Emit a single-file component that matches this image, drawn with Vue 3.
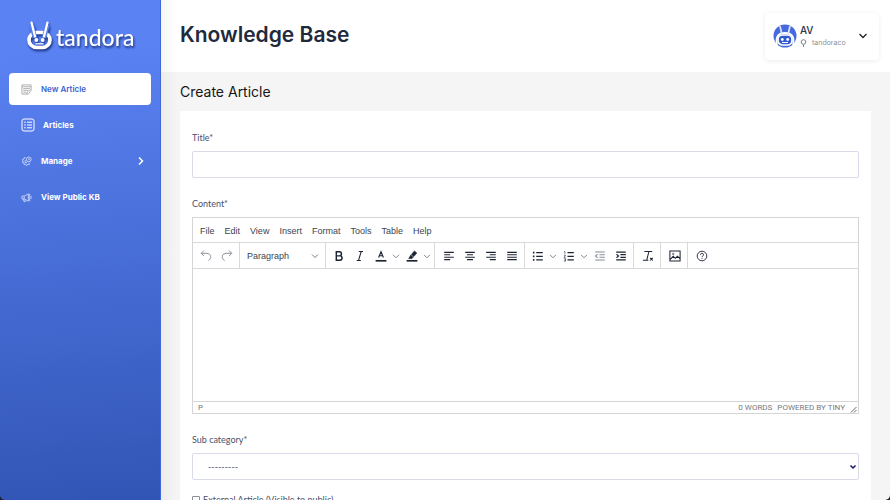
<script setup>
import { ref } from 'vue'

const title = ref('')
const category = ref('')
const external = ref(false)
const menus = ['File', 'Edit', 'View', 'Insert', 'Format', 'Tools', 'Table', 'Help']

const chevron = '<path d="M5 8 10 13l5-5"/>'
const groups = [
  [
    { label: 'Bold', body: '<path stroke-width="2.4" d="M5.500 3h5.200a3.300 3.300 0 0 1 0 6.800H5.500zM5.500 9.800h6a3.600 3.600 0 0 1 0 7.200h-6z"/>' },
    { label: 'Italic', body: '<path d="M8 2.500h7M4.500 17.500h7M12 2.500l-4.500 15" stroke-width="1.700"/>' },
    { label: 'Text color', body: '<path d="M6 12.500 10 3l4 9.500M7.300 9.500h5.400" stroke-width="1.900"/><path d="M1 18h18" stroke-width="2.800"/>' },
    { label: 'Text color options', arrow: true, body: chevron },
    { label: 'Highlight', body: '<path d="M9 7.500l5-6 4 3.500-5 6zM8 8.500l4 3.500-2 2.200H4.500z" fill="currentColor" stroke-width="1"/><path d="M1 18h18" stroke-width="2.800"/>' },
    { label: 'Highlight options', arrow: true, body: chevron },
  ],
  [
    { label: 'Align left', body: '<path d="M2 4h16M2 8h10M2 12h16M2 16h10" stroke-width="1.900"/>' },
    { label: 'Align center', body: '<path d="M2 4h16M5 8h10M2 12h16M5 16h10" stroke-width="1.900"/>' },
    { label: 'Align right', body: '<path d="M2 4h16M8 8h10M2 12h16M8 16h10" stroke-width="1.900"/>' },
    { label: 'Justify', body: '<path d="M2 4h16M2 8h16M2 12h16M2 16h16" stroke-width="1.900"/>' },
  ],
  [
    { label: 'Bullet list', body: '<path d="M7 4.500h11M7 10.500h11M7 16.500h11" stroke-width="2"/><path d="M1.500 4.500h2.600M1.500 10.500h2.600M1.500 16.500h2.600" stroke-width="2.800"/>' },
    { label: 'Bullet list options', arrow: true, body: chevron },
    { label: 'Numbered list', body: '<path d="M7.500 4.500H18M7.500 10.500H18M7.500 16.500H18" stroke-width="2"/><path d="M2 2.500h1.200v4M1.500 8.800h2.700L1.800 12.300h2.700M1.500 14.600h2.800v4H1.500M2.200 16.600h2" stroke-width="1"/>' },
    { label: 'Numbered list options', arrow: true, body: chevron },
    { label: 'Outdent', dim: true, body: '<path d="M2 3.500h16M9 7.800h9M9 12.200h9M2 16.500h16M6 7l-3.500 3L6 13" stroke-width="1.700"/>' },
    { label: 'Indent', body: '<path d="M2 3.500h16M9 7.800h9M9 12.200h9M2 16.500h16M2.500 7 6 10l-3.500 3" stroke-width="1.900"/>' },
  ],
  [
    { label: 'Clear formatting', body: '<path d="M4 2.500h13M11.500 2.500 8 16.500M1.500 17h9M13.500 13l4.500 4.500M18 13l-4.500 4.500" stroke-width="1.700"/>' },
  ],
  [
    { label: 'Insert image', body: '<path d="M1.500 1.500h17v17h-17zM2 15.500l5-5 3.500 3.500L14 10.500l4.500 4" stroke-width="1.700"/><circle cx="7" cy="6.500" r="1.300"/>' },
  ],
  [
    { label: 'Help', body: '<circle cx="10" cy="10" r="8" stroke-width="1.500"/><path d="M7.500 8a2.500 2.500 0 1 1 3.600 2.200c-.8.400-1.100.800-1.100 1.700M10 13.700v1.500" stroke-width="1.600"/>' },
  ],
]
const isLoose = (group) => !group.some((tool) => tool.arrow)
</script>

<template>
  <div class="app">
    <aside class="sidebar">
      <a class="logo" href="#" aria-label="tandora">
        <svg width="28" height="32" viewBox="0 0 28 32" fill="none" aria-hidden="true">
          <rect x="3" y="12.500" width="21" height="15" rx="7.500" stroke="#fff" stroke-width="3.600" />
          <path d="M5.500 5 9 18M21.500 5 18 18" stroke="#5a80f0" stroke-width="4.600" />
          <path d="M5.500 2.500 9 16.500M21.500 2.500 18 16.500" stroke="#fff" stroke-width="2.200" stroke-linecap="round" />
          <circle cx="10.300" cy="20" r="1.900" fill="#fff" />
          <circle cx="16.700" cy="20" r="1.900" fill="#fff" />
          <path d="M9.500 23.800h8" stroke="#fff" stroke-width="1.200" />
        </svg>
        <span>tandora</span>
      </a>
      <nav class="nav">
        <a class="item active" href="#">
          <svg class="icon" viewBox="0 0 12 12" aria-hidden="true">
            <path d="M1 1h10v6L8 11H1zM1 3h10M2.500 5h7M2.500 7h5M2.500 9h3M6 11l1-2.500L10.500 6" />
          </svg>
          <span>New Article</span>
        </a>
        <a class="item" href="#">
          <svg class="icon big" viewBox="0 0 14 14" aria-hidden="true">
            <rect x="1" y="1" width="12" height="12" rx="2" />
            <path d="M3.200 4.200h1.600M3.200 7h1.600M3.200 9.800h1.600M6 4.200h5M6 7h5M6 9.800h5" />
          </svg>
          <span>Articles</span>
        </a>
        <a class="item" href="#">
          <svg class="icon soft" viewBox="0 0 12 12" aria-hidden="true">
            <path d="M5 2 3.500 1.800 3.300 3.300 1.500 4l.7 1.500L1.500 7l1.800.7v1.500L5 9l1 1.700L7.300 9 9 9.300V7.500" />
            <circle cx="8.500" cy="3.700" r="2.600" />
            <path d="M4.500 4.500v2.700h2M8.500 2.500v1.500h1.200" />
          </svg>
          <span>Manage</span>
          <svg class="caret" viewBox="0 0 10 10" aria-hidden="true"><path d="M3 1.500 6.500 5 3 8.500" /></svg>
        </a>
        <a class="item" href="#">
          <svg class="icon soft" viewBox="0 0 12 12" aria-hidden="true">
            <path d="M1 4.500h2.500L8 2v8L3.500 7.500H1zM3.500 4.500v3M2.500 7.500l.8 3h1.500L4.300 8M9.500 2v8M11 4.500v3" />
          </svg>
          <span>View Public KB</span>
        </a>
      </nav>
    </aside>

    <div class="page">
      <header class="header">
        <h1>Knowledge Base</h1>
        <button class="account" type="button">
          <svg class="avatar" viewBox="0 0 24 24" fill="none" aria-hidden="true">
            <circle cx="12" cy="12" r="11.500" fill="#466ade" />
            <path d="M4 21c-2-9 2-12 8-12s10 3 8 12" stroke="#fff" stroke-width="1.800" />
            <path d="M7 2l1.800 8M17 2l-1.800 8" stroke="#dce4fa" stroke-width="1.700" />
            <rect x="5" y="11" width="14" height="10" rx="4.500" fill="#3159d3" stroke="#fff" stroke-width="1.700" />
            <circle cx="9.300" cy="15.500" r="1.400" fill="#fff" />
            <circle cx="14.700" cy="15.500" r="1.400" fill="#fff" />
            <path d="M9 18.500h6" stroke="#fff" />
          </svg>
          <span class="who">
            <strong>AV</strong>
            <span class="org">
              <svg width="7" height="8" viewBox="0 0 7 8" fill="none" stroke="#7b8290" aria-hidden="true">
                <circle cx="3.500" cy="3" r="2.300" /><path d="M3.500 5.500V8" />
              </svg>
              tandoraco
            </span>
          </span>
          <svg class="down" viewBox="0 0 10 10" aria-hidden="true"><path d="M1.500 3 5 6.500 8.500 3" /></svg>
        </button>
      </header>

      <main class="content">
        <h2>Create Article</h2>
        <form class="card" @submit.prevent>
          <div class="field">
            <label for="title">Title*</label>
            <input id="title" v-model="title" class="control" type="text" />
          </div>

          <div class="field">
            <label for="body">Content*</label>
            <div class="editor">
              <div class="menubar">
                <button v-for="m in menus" :key="m" type="button">{{ m }}</button>
              </div>
              <div class="toolbar">
                <div class="group">
                  <button class="tool dim" type="button" aria-label="Undo">
                    <svg viewBox="0 0 20 20"><path d="M6.500 1 2 5.500 6.500 10M2.500 5.500H11c8.500 0 8.500 9.500 3 12" stroke-width="1.600" /></svg>
                  </button>
                  <button class="tool dim" type="button" aria-label="Redo">
                    <svg viewBox="0 0 20 20"><path d="M13.500 1 18 5.500 13.500 10M17.500 5.500H9c-8.500 0-8.500 9.500-3 12" stroke-width="1.600" /></svg>
                  </button>
                </div>
                <div class="group">
                  <button class="format" type="button">
                    <span>Paragraph</span>
                    <svg viewBox="0 0 20 20" aria-hidden="true"><path d="M5 7.500 10 12.500l5-5" /></svg>
                  </button>
                </div>
                <div v-for="(g, i) in groups" :key="i" class="group" :class="{ loose: isLoose(g) }">
                  <button
                    v-for="t in g"
                    :key="t.label"
                    type="button"
                    class="tool"
                    :class="{ dim: t.dim, arrow: t.arrow }"
                    :aria-label="t.label"
                  >
                    <svg viewBox="0 0 20 20" v-html="t.body"></svg>
                  </button>
                </div>
              </div>
              <textarea id="body"></textarea>
              <div class="status">
                <span>P</span>
                <span class="words">0 WORDS</span>
                <a href="#">POWERED BY TINY</a>
                <svg class="grip" viewBox="0 0 8 8" aria-hidden="true"><path d="M1 7.500 7.500 1M4.500 7.500l3-3" /></svg>
              </div>
            </div>
          </div>

          <div class="field">
            <label for="category">Sub category*</label>
            <div class="select">
              <select id="category" v-model="category" class="control">
                <option value="">---------</option>
              </select>
              <svg viewBox="0 0 8 8" aria-hidden="true"><path d="M1.500 2.500 4 5l2.500-2.500" /></svg>
            </div>
          </div>

          <label class="check">
            <input v-model="external" type="checkbox" />
            <span>External Article (Visible to public)</span>
          </label>
        </form>
      </main>
    </div>
  </div>
</template>

<style>
body {
  background: #17212f;
}
</style>

<style scoped>
* {
  box-sizing: border-box;
}
.app {
  display: flex;
  height: 100vh;
  overflow: hidden;
  border-radius: 0 0 5px 5px;
  font-family: Lato, "Open Sans", sans-serif;
  color: #4c4f6b;
}
button {
  padding: 0;
  border: 0;
  background: none;
  color: inherit;
  font: inherit;
}
a {
  color: inherit;
  text-decoration: none;
}

.sidebar {
  flex: 0 0 161px;
  padding: 16px 9px;
  background: linear-gradient(175deg, #5b82f3 10%, #3155b5 100%);
  border-right: 1px solid #4168da;
  color: #fff;
  font-family: Inter, sans-serif;
}
.logo {
  display: flex;
  align-items: center;
  gap: 2px;
  height: 40px;
  padding-left: 17px;
  margin-bottom: 17px;
  font: 500 23px/28px Lato, sans-serif;
  filter: drop-shadow(1px 2px 1px #1c3683);
}
.logo span {
  padding-top: 2px;
}
.nav {
  display: flex;
  flex-direction: column;
  gap: 4px;
}
.item {
  display: flex;
  align-items: center;
  gap: 9px;
  height: 32px;
  padding: 0 5px 0 12px;
  border-radius: 4px;
  font-size: 8px;
  font-weight: 700;
}
.item.active {
  background: #fff;
  color: #3c5fd0;
  font-weight: 600;
}
.icon {
  width: 11px;
  height: 11px;
  fill: none;
  stroke: currentColor;
}
.active .icon {
  stroke: #a9a9a9;
}
.icon.big {
  width: 14px;
  height: 14px;
  margin-right: -1px;
}
.icon.soft {
  opacity: 0.7;
}
.caret {
  width: 10px;
  height: 10px;
  margin-left: auto;
  fill: none;
  stroke: #fff;
  stroke-width: 1.5;
}

.page {
  flex: 1;
  min-width: 0;
  display: flex;
  flex-direction: column;
  background: linear-gradient(90deg, #ececec, #f5f5f5 16px);
}
.header {
  flex: 0 0 72px;
  display: flex;
  align-items: center;
  justify-content: space-between;
  padding: 0 11px 0 19px;
  background: linear-gradient(90deg, #f7f7f7, #fff 16px);
}
h1 {
  margin: 0;
  padding-bottom: 2px;
  color: #1f2a3d;
  font: 600 21px/32px Inter, sans-serif;
}
.account {
  display: flex;
  align-items: center;
  gap: 3px;
  width: 114px;
  height: 47px;
  padding: 0 11px 0 8px;
  border-radius: 4px;
  background: #fff;
  box-shadow: 0 1px 5px #ececf0;
  text-align: left;
}
.avatar {
  width: 24px;
  height: 24px;
}
.who {
  flex: 1;
  display: flex;
  flex-direction: column;
  font-family: Inter, sans-serif;
}
.who strong {
  color: #27303f;
  font-size: 10px;
  font-weight: 500;
  line-height: 13px;
}
.org {
  display: flex;
  align-items: center;
  gap: 5px;
  color: #8b909b;
  font-size: 7px;
  line-height: 11px;
}
.down {
  width: 10px;
  height: 10px;
  fill: none;
  stroke: #222;
  stroke-width: 1.3;
}

.content {
  flex: 1;
  min-height: 0;
  overflow-y: auto;
  scrollbar-width: none;
  padding: 10px 19px 0;
}
h2 {
  margin: 0 0 9px;
  color: #161616;
  font: 400 14px/20px Inter, sans-serif;
}
.card {
  padding: 19px 12px;
  background: #fff;
}
.field {
  margin-bottom: 18px;
}
.field > label {
  display: block;
  margin-bottom: 5px;
  font-size: 9px;
  line-height: 16px;
}
.control {
  display: block;
  width: 100%;
  height: 27px;
  padding: 0 15px;
  border: 1px solid #d9daea;
  border-radius: 2px;
  background: #fff;
  color: #4c4f6b;
  font: 9px/16px Lato, sans-serif;
  appearance: none;
}
.select {
  position: relative;
}
.select svg {
  position: absolute;
  top: 10px;
  right: 2px;
  width: 8px;
  height: 8px;
  fill: none;
  stroke: #13136b;
  stroke-width: 1.5;
  pointer-events: none;
}

.editor {
  border: 1px solid #d5d5d5;
  background: #fff;
  color: #3c4452;
  font-family: "Liberation Sans", sans-serif;
}
.menubar {
  display: flex;
  gap: 10px;
  height: 25px;
  padding: 2px 7px 0;
  border-bottom: 1px solid #d9d9d9;
  font-size: 9px;
}
.toolbar {
  display: flex;
  height: 26px;
  border-bottom: 1px solid #d9d9d9;
}
.group {
  display: flex;
  padding: 0 2px;
  border-right: 1px solid #d9d9d9;
}
.group.loose {
  padding-left: 3px;
}
.group:last-child {
  border-right: 0;
}
.tool {
  display: flex;
  align-items: center;
  justify-content: center;
  width: 21px;
  color: #1c2434;
}
.tool.arrow {
  width: 10px;
}
.tool svg {
  flex: none;
  width: 12px;
  height: 12px;
  fill: none;
  stroke: currentColor;
}
.arrow svg {
  stroke: #7b818b;
  stroke-width: 1.6;
}
.tool.dim {
  color: #858b95;
}
.format {
  display: flex;
  align-items: center;
  justify-content: space-between;
  width: 81px;
  padding: 0 2px 0 5px;
  font-size: 9px;
}
.format svg {
  width: 12px;
  height: 12px;
  fill: none;
  stroke: #666d78;
  stroke-width: 1.5;
}
textarea {
  display: block;
  width: 100%;
  height: 132px;
  padding: 8px;
  border: 0;
  resize: none;
}
.status {
  display: flex;
  align-items: center;
  gap: 5px;
  height: 12px;
  padding: 0 1px 0 5px;
  border-top: 1px solid #d5d5d5;
  color: #747982;
  font: 8px/11px Roboto, sans-serif;
}
.words {
  margin-left: auto;
}
.grip {
  width: 7px;
  height: 7px;
  align-self: flex-end;
  fill: none;
  stroke: #555;
}
.check {
  display: flex;
  align-items: center;
  gap: 3px;
  margin-top: -6px;
  font-size: 9px;
  line-height: 16px;
}
.check input {
  appearance: none;
  width: 8px;
  height: 8px;
  margin: 0;
  border: 1px solid #8b8b92;
  border-radius: 1px;
  background: #fff;
}
.check input:checked {
  background: #466ade;
}
</style>
